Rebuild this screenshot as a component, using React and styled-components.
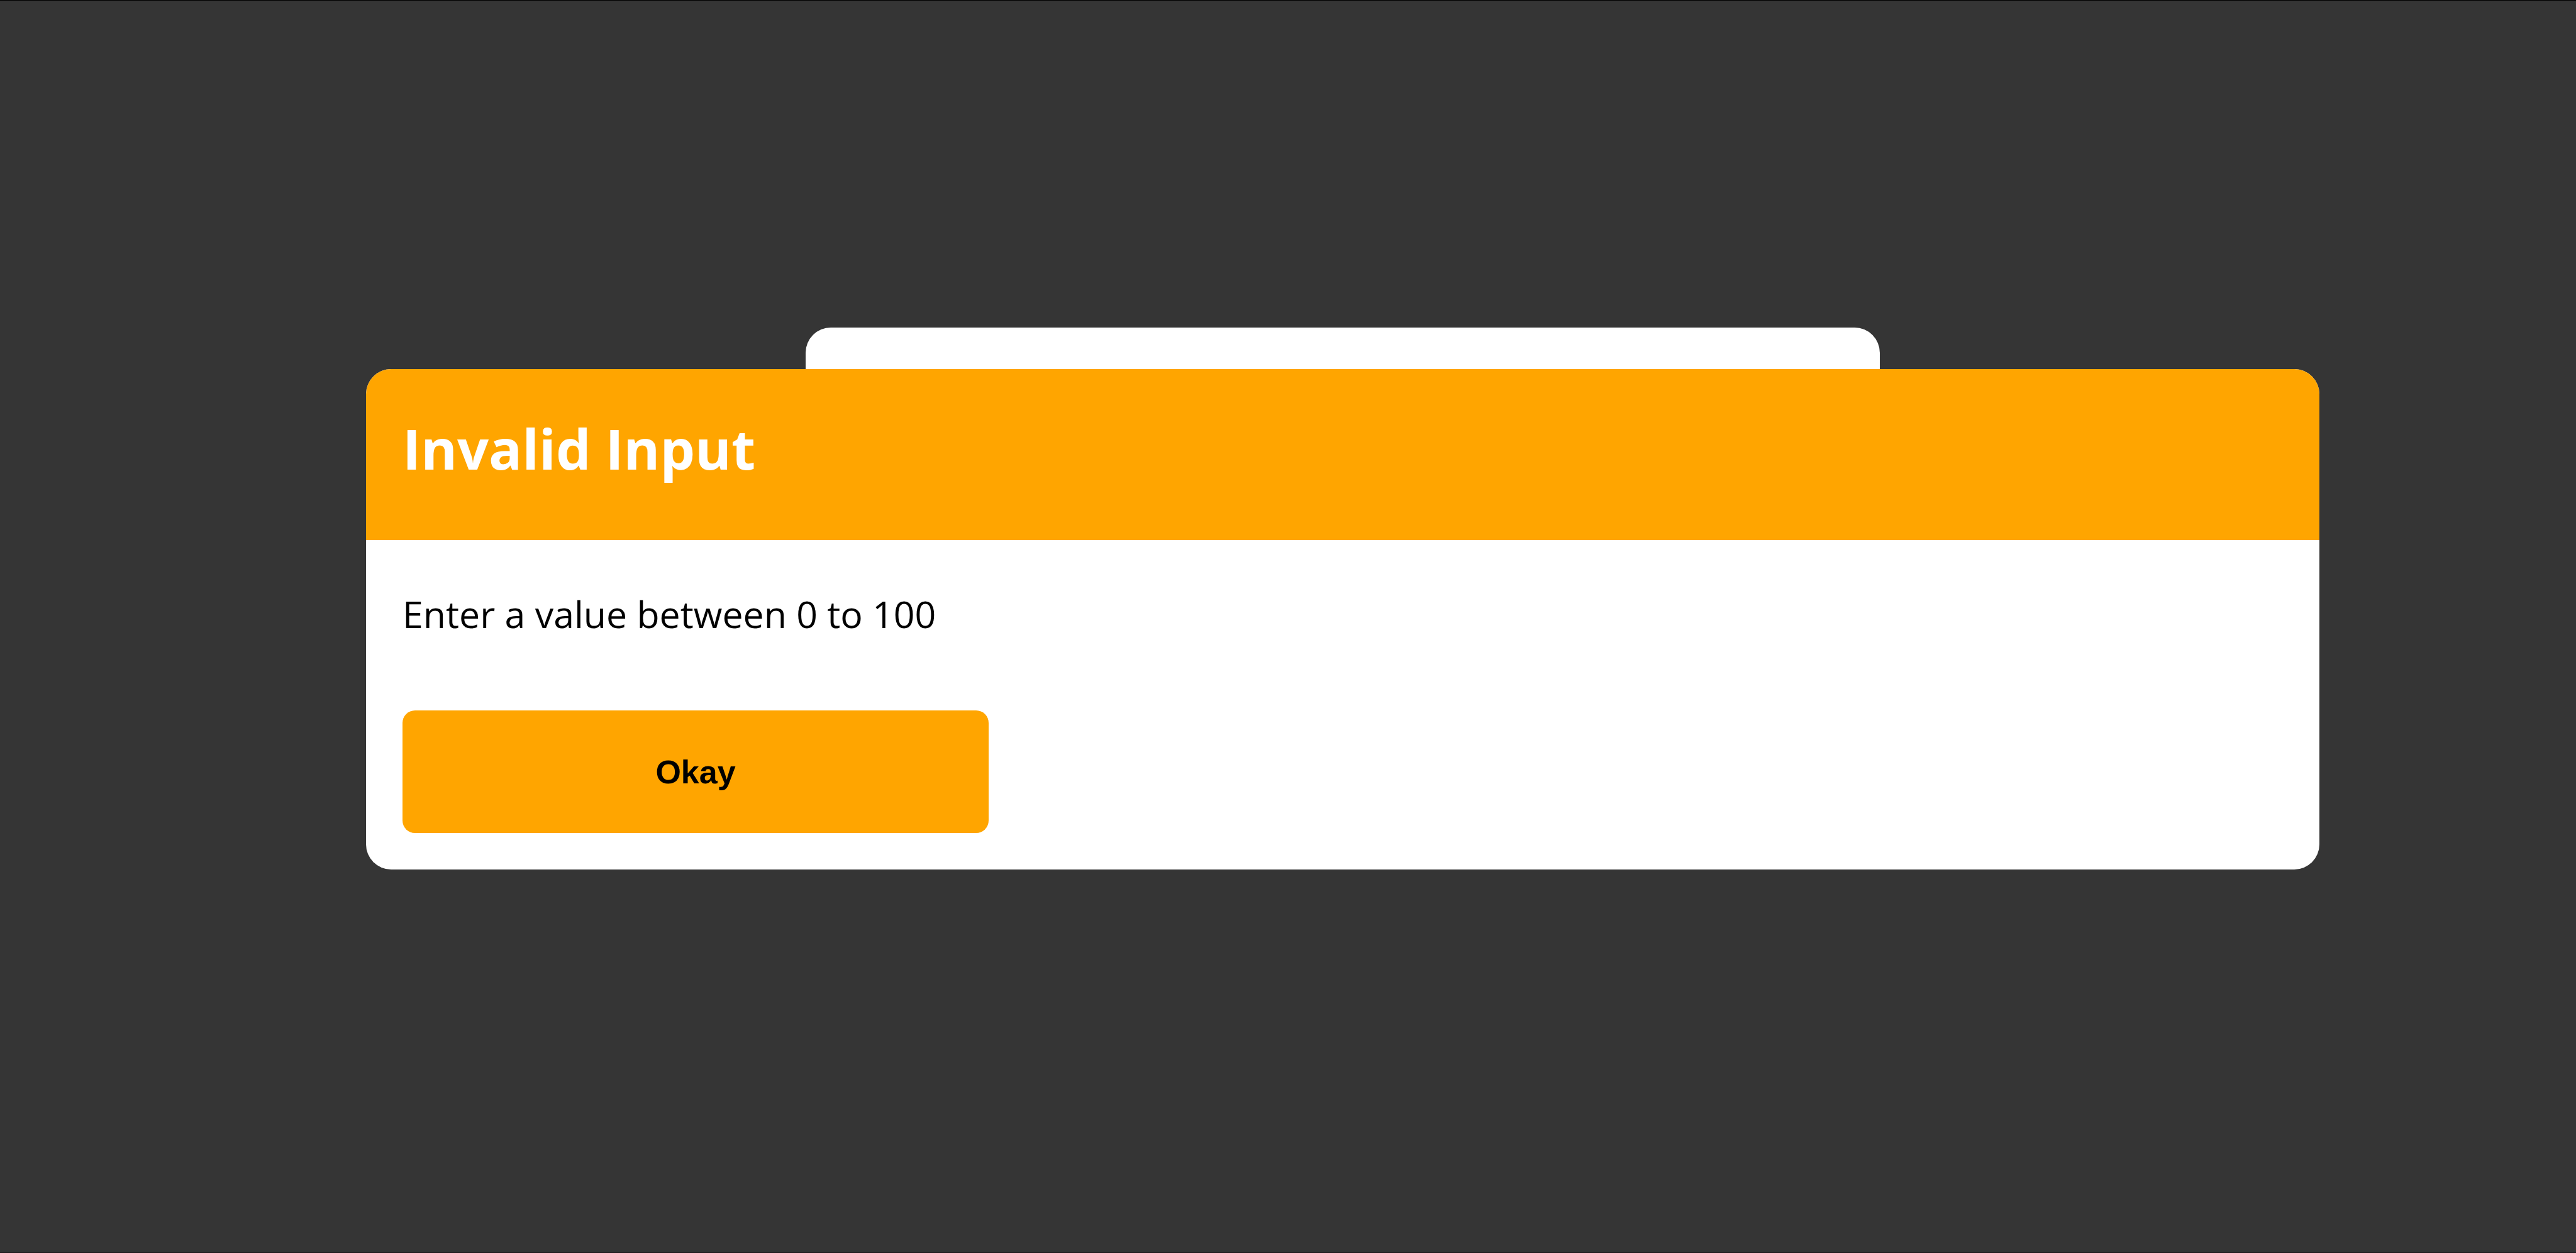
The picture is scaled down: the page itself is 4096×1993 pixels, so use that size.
import React from "react";
import styled, { createGlobalStyle } from "styled-components";

const GlobalStyle = createGlobalStyle`
  * { box-sizing: border-box; }
  body { margin: 0; background: #353535; font-family: "Open Sans", "Noto Sans", sans-serif; }
`;

const Page = styled.main`
  display: grid;
  justify-items: center;
  align-content: start;
  min-height: 100vh;
  padding: 520px 0 0 174px;
  border-top: 1px solid #000;
  border-bottom: 1px solid #1f181b;
`;

const FormCard = styled.section`
  grid-area: 1 / 1;
  width: 1708px;
  max-width: 100%;
  height: 400px;
  border-radius: 40px;
  background: #fff;
`;

const Dialog = styled.section`
  grid-area: 1 / 1;
  z-index: 1;
  width: 3106px;
  max-width: 100%;
  margin-top: 66px;
  border-radius: 40px;
  overflow: hidden;
  background: #fff;
`;

const DialogHeader = styled.header`
  padding: 62px 58px 82px;
  background: #ffa500;
`;

const Title = styled.h2`
  margin: 0;
  color: #fff;
  font-size: 88px;
  font-weight: 700;
  line-height: 128px;
`;

const DialogBody = styled.div`
  padding: 75px 58px 58px;
`;

const Message = styled.p`
  margin: 0 0 112px;
  color: #000;
  font-size: 59px;
  font-weight: 400;
  line-height: 84px;
`;

const ConfirmButton = styled.button`
  display: block;
  width: 932px;
  max-width: 100%;
  padding: 68px 24px 67px;
  border: 0;
  border-radius: 20px;
  background: #ffa500;
  color: #000;
  font-family: "Liberation Sans", Arial, sans-serif;
  font-size: 52px;
  font-weight: 700;
  line-height: 60px;
`;

export default function App() {
  return (
    <>
      <GlobalStyle />
      <Page>
        <FormCard />
        <Dialog role="dialog" aria-labelledby="dialog-title">
          <DialogHeader>
            <Title id="dialog-title">Invalid Input</Title>
          </DialogHeader>
          <DialogBody>
            <Message>Enter a value between 0 to 100</Message>
            <ConfirmButton type="button">Okay</ConfirmButton>
          </DialogBody>
        </Dialog>
      </Page>
    </>
  );
}
